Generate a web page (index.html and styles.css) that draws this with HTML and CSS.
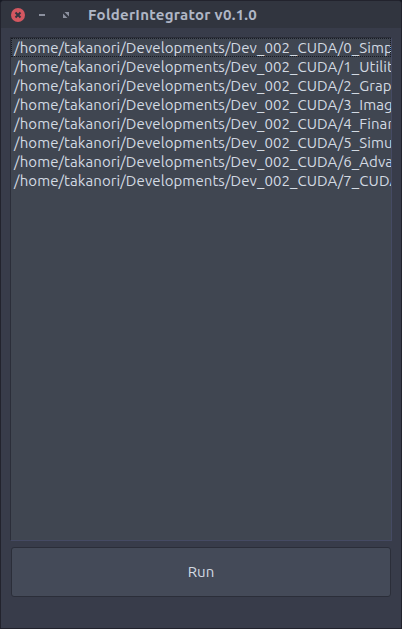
FILE: index.html
```
<!DOCTYPE html>
<html lang="en">
<head>
<meta charset="utf-8">
<title>FolderIntegrator v0.1.0</title>
<link rel="stylesheet" href="styles.css">
</head>
<body>
<main class="window">
  <header class="titlebar">
    <svg class="controls" width="64" height="16" viewBox="0 0 64 16" aria-hidden="true">
      <circle cx="8" cy="8" r="7" fill="#d35760"/>
      <path d="M5.5 5.5l5 5M10.5 5.5l-5 5" stroke="#323640" stroke-width="2"/>
      <path d="M29 8h6" stroke="#8b909e" stroke-width="2"/>
      <path d="M54.5 5h4.5v4.5zM53 6.5v4.5h4.5z" fill="#8b909e"/>
    </svg>
    <h1 class="title">FolderIntegrator v0.1.0</h1>
  </header>
  <ul class="list">
    <li class="row focused">/home/takanori/Developments/Dev_002_CUDA/0_Simp</li>
    <li class="row">/home/takanori/Developments/Dev_002_CUDA/1_Utilit</li>
    <li class="row">/home/takanori/Developments/Dev_002_CUDA/2_Grap</li>
    <li class="row">/home/takanori/Developments/Dev_002_CUDA/3_Imag</li>
    <li class="row">/home/takanori/Developments/Dev_002_CUDA/4_Finan</li>
    <li class="row">/home/takanori/Developments/Dev_002_CUDA/5_Simu</li>
    <li class="row">/home/takanori/Developments/Dev_002_CUDA/6_Adva</li>
    <li class="row">/home/takanori/Developments/Dev_002_CUDA/7_CUDA</li>
  </ul>
  <button class="run">Run</button>
</main>
</body>
</html>
```
FILE: styles.css
```
* { box-sizing: border-box; }
body { margin: 0; background: #171a24; font-family: Ubuntu, "Noto Sans", sans-serif; }
.window {
  width: 402px;
  height: 629px;
  display: flex;
  flex-direction: column;
  background: #383c4a;
  border: 1px solid #22232d;
  border-radius: 4px 4px 0 0;
  overflow: hidden;
}
.titlebar {
  flex: none;
  height: 27px;
  display: flex;
  align-items: center;
  padding-left: 9px;
  background: #31353f;
}
.controls { display: block; flex: none; }
.title {
  margin: 0 0 0 14px;
  font-size: 15px;
  letter-spacing: 0.28px;
  line-height: 20px;
  font-weight: 700;
  color: #b0b7c6;
  white-space: nowrap;
}
.list {
  flex: none;
  width: 382px;
  height: 504px;
  margin: 9px 0 0 9px;
  padding: 0;
  list-style: none;
  overflow: hidden;
  background: #404651;
  border: 1px solid #2b2e39;
  border-right-color: #454a63;
  border-bottom-color: #454a63;
}
.row {
  height: 19px;
  padding-left: 3px;
  font-size: 15px;
  letter-spacing: 0.08px;
  line-height: 20px;
  color: #d3dae3;
  white-space: nowrap;
}
.focused { outline: 1px dotted #171a22; outline-offset: -1px; }
.run {
  flex: none;
  width: 380px;
  height: 50px;
  margin: 6px 0 0 10px;
  padding: 0;
  border: 1px solid #2b2e39;
  border-radius: 3px;
  background: #444a58;
  color: #d3dae3;
  font: 15px/20px Ubuntu, "Noto Sans", sans-serif;
}
```
